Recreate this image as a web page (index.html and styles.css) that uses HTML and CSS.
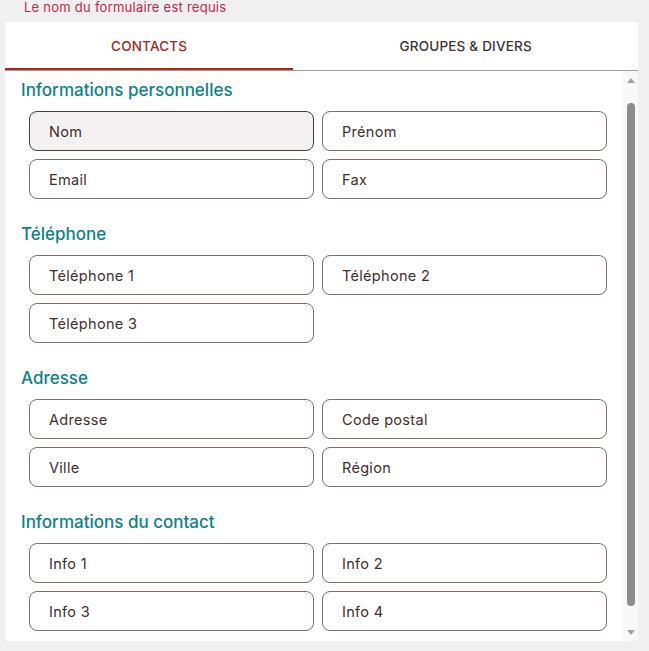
FILE: index.html
```html
<!DOCTYPE html>
<html lang="fr">
<head>
    <meta charset="UTF-8">
    <meta name="viewport" content="width=device-width, initial-scale=1.0">
    <title>Formulaire - Contacts</title>
    <link rel="stylesheet" href="styles.css">
</head>
<body>
    <p class="form-error">Le nom du formulaire est requis</p>

    <div class="panel">
        <div class="tabs">
            <button class="tab active">Contacts</button>
            <button class="tab">Groupes &amp; divers</button>
        </div>

        <div class="tab-wrap">
            <div class="tab-body">
                <section class="section">
                    <h3>Informations personnelles</h3>
                    <div class="field-grid">
                        <input class="field field-focus" type="text" placeholder="Nom">
                        <input class="field" type="text" placeholder="Prénom">
                        <input class="field" type="email" placeholder="Email">
                        <input class="field" type="text" placeholder="Fax">
                    </div>
                </section>

                <section class="section">
                    <h3>Téléphone</h3>
                    <div class="field-grid">
                        <input class="field" type="tel" placeholder="Téléphone 1">
                        <input class="field" type="tel" placeholder="Téléphone 2">
                        <input class="field" type="tel" placeholder="Téléphone 3">
                    </div>
                </section>

                <section class="section">
                    <h3>Adresse</h3>
                    <div class="field-grid">
                        <input class="field" type="text" placeholder="Adresse">
                        <input class="field" type="text" placeholder="Code postal">
                        <input class="field" type="text" placeholder="Ville">
                        <input class="field" type="text" placeholder="Région">
                    </div>
                </section>

                <section class="section">
                    <h3>Informations du contact</h3>
                    <div class="field-grid">
                        <input class="field" type="text" placeholder="Info 1">
                        <input class="field" type="text" placeholder="Info 2">
                        <input class="field" type="text" placeholder="Info 3">
                        <input class="field" type="text" placeholder="Info 4">
                    </div>
                </section>
            </div>

            <!-- scrollbar -->
            <div class="scrollbar">
                <span class="arrow arrow-up"></span>
                <div class="track"><div class="thumb"></div></div>
                <span class="arrow arrow-down"></span>
            </div>
        </div>
    </div>
</body>
</html>
```

FILE: styles.css
```css
body {
    font-family: Inter, "Noto Sans", sans-serif;
    background-color: #f0f0f0;
    margin: 0;
    padding: 0 11px 0 5px;
}
.form-error {
    margin: 0 0 8px 19px;
    font-size: 13px;
    letter-spacing: 0.25px;
    line-height: 14px;
    color: #c62848;
}
.panel {
    background-color: #fff;
    height: 619px;
    display: flex;
    flex-direction: column;
}
.tabs {
    display: flex;
    border-bottom: 1px solid #9e9e9e;
}
.tab {
    flex: 1 1 auto;
    height: 48px;
    padding: 0;
    background: none;
    border: none;
    font-family: inherit;
    font-size: 13.5px;
    letter-spacing: 0.2px;
    font-weight: 500;
    text-transform: uppercase;
    color: #3a3434;
    cursor: pointer;
}
.tab.active {
    color: #9b2a22;
    box-shadow: inset 0 -2px 0 #a8261e;
}
.tab-wrap {
    flex: 1;
    display: flex;
    min-height: 0;
}
.tab-body {
    flex: 1;
    overflow: hidden;
    padding: 7px 16px 0 16px;
    display: flex;
    flex-direction: column;
    gap: 23px;
}
.section h3 {
    margin: 0 0 9px;
    font-size: 17px;
    font-weight: 500;
    line-height: 24px;
    color: #0d8288;
}
.field-grid {
    display: grid;
    grid-template-columns: 1fr 1fr;
    gap: 8px;
    padding-left: 8px;
}
.field {
    height: 40px;
    box-sizing: border-box;
    border: 1px solid #7d6e69;
    border-radius: 8px;
    padding: 0 19px;
    font-family: inherit;
    font-size: 14.5px;
    letter-spacing: 0.3px;
    background-color: #fff;
    outline: none;
}
.field::placeholder {
    color: #3f2e2a;
    font-weight: 400;
}
.field-focus {
    background-color: #f3f1f1;
    border-color: #4a3b38;
}
.scrollbar {
    width: 15px;
    background-color: #f8f8f8;
    display: flex;
    flex-direction: column;
    align-items: center;
}
.arrow {
    width: 0;
    height: 0;
    border-left: 4px solid transparent;
    border-right: 4px solid transparent;
    margin: 7px 0 6px;
}
.arrow-up {
    border-bottom: 5px solid #a3a3a3;
}
.arrow-down {
    border-top: 5px solid #a3a3a3;
}
.track {
    flex: 1;
    width: 100%;
    padding: 14px 0 17px;
    box-sizing: border-box;
    display: flex;
    justify-content: center;
}
.thumb {
    width: 8px;
    height: 100%;
    border-radius: 4px;
    background-color: #8c8c8c;
}
```
